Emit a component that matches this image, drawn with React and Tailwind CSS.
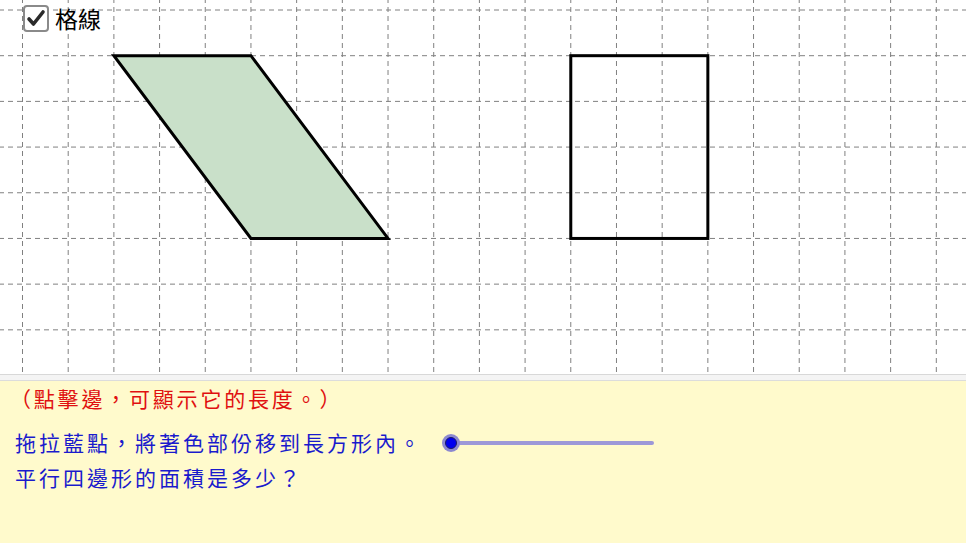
import React from "react";

const STEP = 45.69;
const X0 = 22.5;
const Y0 = 10;

function GridCanvas() {
  const xs = [];
  for (let k = 0; k <= 20; k++) xs.push(X0 + k * STEP);
  const ys = [];
  for (let k = 0; k <= 7; k++) ys.push(Y0 + k * STEP);
  const px = (i) => X0 + i * STEP;
  const py = (j) => Y0 + j * STEP;

  return (
    <svg width="966" height="374" viewBox="0 0 966 374" className="block">
      <rect x="0" y="0" width="966" height="374" fill="#ffffff" />
      <g stroke="#808080" strokeWidth="1" strokeDasharray="5 4">
        {xs.map((x) => (
          <line key={"v" + x} x1={x} y1={-2} x2={x} y2={374} />
        ))}
        {ys.map((y) => (
          <line key={"h" + y} x1={-1} y1={y} x2={966} y2={y} />
        ))}
      </g>
      <polygon
        points={`${px(2)},${py(1)} ${px(5)},${py(1)} ${px(8)},${py(5)} ${px(5)},${py(5)}`}
        fill="#c9e0c9"
        stroke="#000000"
        strokeWidth="3"
        strokeLinejoin="miter"
      />
      <rect
        x={px(12)}
        y={py(1)}
        width={STEP * 3}
        height={STEP * 4}
        fill="none"
        stroke="#000000"
        strokeWidth="3"
      />
    </svg>
  );
}

export default function App() {
  const cjk = { fontFamily: '"Noto Sans CJK TC", "Noto Sans CJK SC", sans-serif' };

  return (
    <main className="w-[966px] h-[543px] overflow-hidden bg-white flex flex-col" style={cjk}>
      <div className="relative h-[374px]">
        <GridCanvas />
        <label className="absolute left-[23px] top-[5px] flex items-center gap-[6px] bg-transparent">
          <span className="w-[26px] h-[27px] rounded-[4px] border-2 border-[#8a8a8a] bg-white flex items-center justify-center">
            <svg width="20" height="19" viewBox="0 0 20 19">
              <path d="M3 10 L7.5 15 L17 3" fill="none" stroke="#2a2a2a" strokeWidth="3.6" strokeLinecap="round" strokeLinejoin="round" />
            </svg>
          </span>
          <span className="text-[23px] leading-none text-black">格線</span>
        </label>
      </div>
      <div className="h-[7px] bg-[#f4f4f4] border-t border-[#d8d8d8] border-b border-b-[#dcdcdc]" />
      <div className="flex-1 bg-[#fffacc] pl-[14px] pt-[4px]">
        <p className="text-[21px] leading-[26px] tracking-[2.8px] text-[#e01010] -ml-[4px]">（點擊邊，可顯示它的長度。）</p>
        <div className="flex items-center mt-[17px] h-[28px]">
          <p className="text-[21px] leading-[28px] tracking-[3px] text-[#1a1acc] pl-[1px]">拖拉藍點，將著色部份移到長方形內。</p>
          <div className="relative ml-[19px] mt-[2px] w-[212px] h-[20px] flex items-center">
            <div className="absolute left-[8px] right-0 h-[4px] rounded-full bg-[#9d98d8]" />
            <div className="absolute left-0 w-[18px] h-[18px] rounded-full bg-[#8c88d0] flex items-center justify-center">
              <div className="w-[12px] h-[12px] rounded-full bg-[#0000ee] border border-[#1a1a66]" />
            </div>
          </div>
        </div>
        <p className="text-[21px] leading-[28px] tracking-[3px] text-[#1a1acc] mt-[7px] pl-[1px]">平行四邊形的面積是多少？</p>
      </div>
    </main>
  );
}
